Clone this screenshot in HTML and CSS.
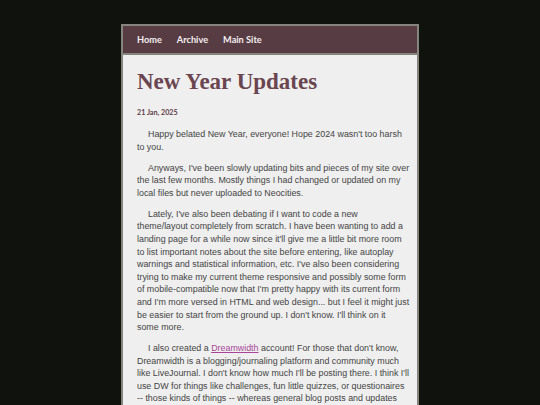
FILE: index.html
```html
<!DOCTYPE html>
<html>
<head>
<meta charset="utf-8">
<link rel="stylesheet" href="styles.css">
</head>
<body>
<div class="page">
  <nav class="nav">
    <a href="#">Home</a>
    <a href="#">Archive</a>
    <a href="#">Main Site</a>
  </nav>
  <main class="content">
    <h1 class="title">New Year Updates</h1>
    <div class="date">21 Jan, 2025</div>
    <p>Happy belated New Year, everyone! Hope 2024 wasn't too harsh<br>to you.</p>
    <p>Anyways, I've been slowly updating bits and pieces of my site over<br>the last few months. Mostly things I had changed or updated on my<br>local files but never uploaded to Neocities.</p>
    <p>Lately, I've also been debating if I want to code a new<br>theme/layout completely from scratch. I have been wanting to add a<br>landing page for a while now since it'll give me a little bit more room<br>to list important notes about the site before entering, like autoplay<br>warnings and statistical information, etc. I've also been considering<br>trying to make my current theme responsive and possibly some form<br>of mobile-compatible now that I'm pretty happy with its current form<br>and I'm more versed in HTML and web design... but I feel it might just<br>be easier to start from the ground up. I don't know. I'll think on it<br>some more.</p>
    <p>I also created a <a href="#">Dreamwidth</a> account! For those that don't know,<br>Dreamwidth is a blogging/journaling platform and community much<br>like LiveJournal. I don't know how much I'll be posting there. I think I'll<br>use DW for things like challenges, fun little quizzes, or questionaires<br>-- those kinds of things -- whereas general blog posts and updates<br>will stay here on my site.</p>
  </main>
</div>
</body>
</html>
```
FILE: styles.css
```css
html, body {
  margin: 0;
  padding: 0;
  background: #0f120d;
  height: 100%;
  overflow: hidden;
}
.page {
  width: 294px;
  margin: 24px auto 0;
  border: 2px solid #85857d;
  background: #efefef;
}
.nav {
  background: #573c43;
  height: 27px;
  display: flex;
  align-items: center;
  gap: 15px;
  padding-left: 14px;
  border-bottom: 2px solid #85857d;
}
.nav a {
  color: #f3eef0;
  text-decoration: none;
  font-family: "Lato", "Liberation Sans", sans-serif;
  font-weight: bold;
  font-size: 9.2px;
}
.content {
  padding: 13px 2px 20px 14px;
  font-family: "Liberation Sans", sans-serif;
  font-size: 8.9px;
  line-height: 12.6px;
  color: #444444;
}
.title {
  margin: 0;
  font-family: "Liberation Serif", serif;
  font-weight: bold;
  font-size: 23px;
  line-height: 28px;
  color: #6a454f;
}
.date {
  margin-top: 10px;
  font-family: "Lato", "Liberation Sans", sans-serif;
  font-weight: bold;
  font-size: 7.2px;
  line-height: 13px;
  color: #5a3c44;
}
.content p {
  margin: 8.4px 0 0;
  text-indent: 11px;
  white-space: nowrap;
}
.content p:first-of-type {
  margin-top: 9px;
}
.content p a {
  color: #a8479a;
  text-decoration: underline;
}
```
